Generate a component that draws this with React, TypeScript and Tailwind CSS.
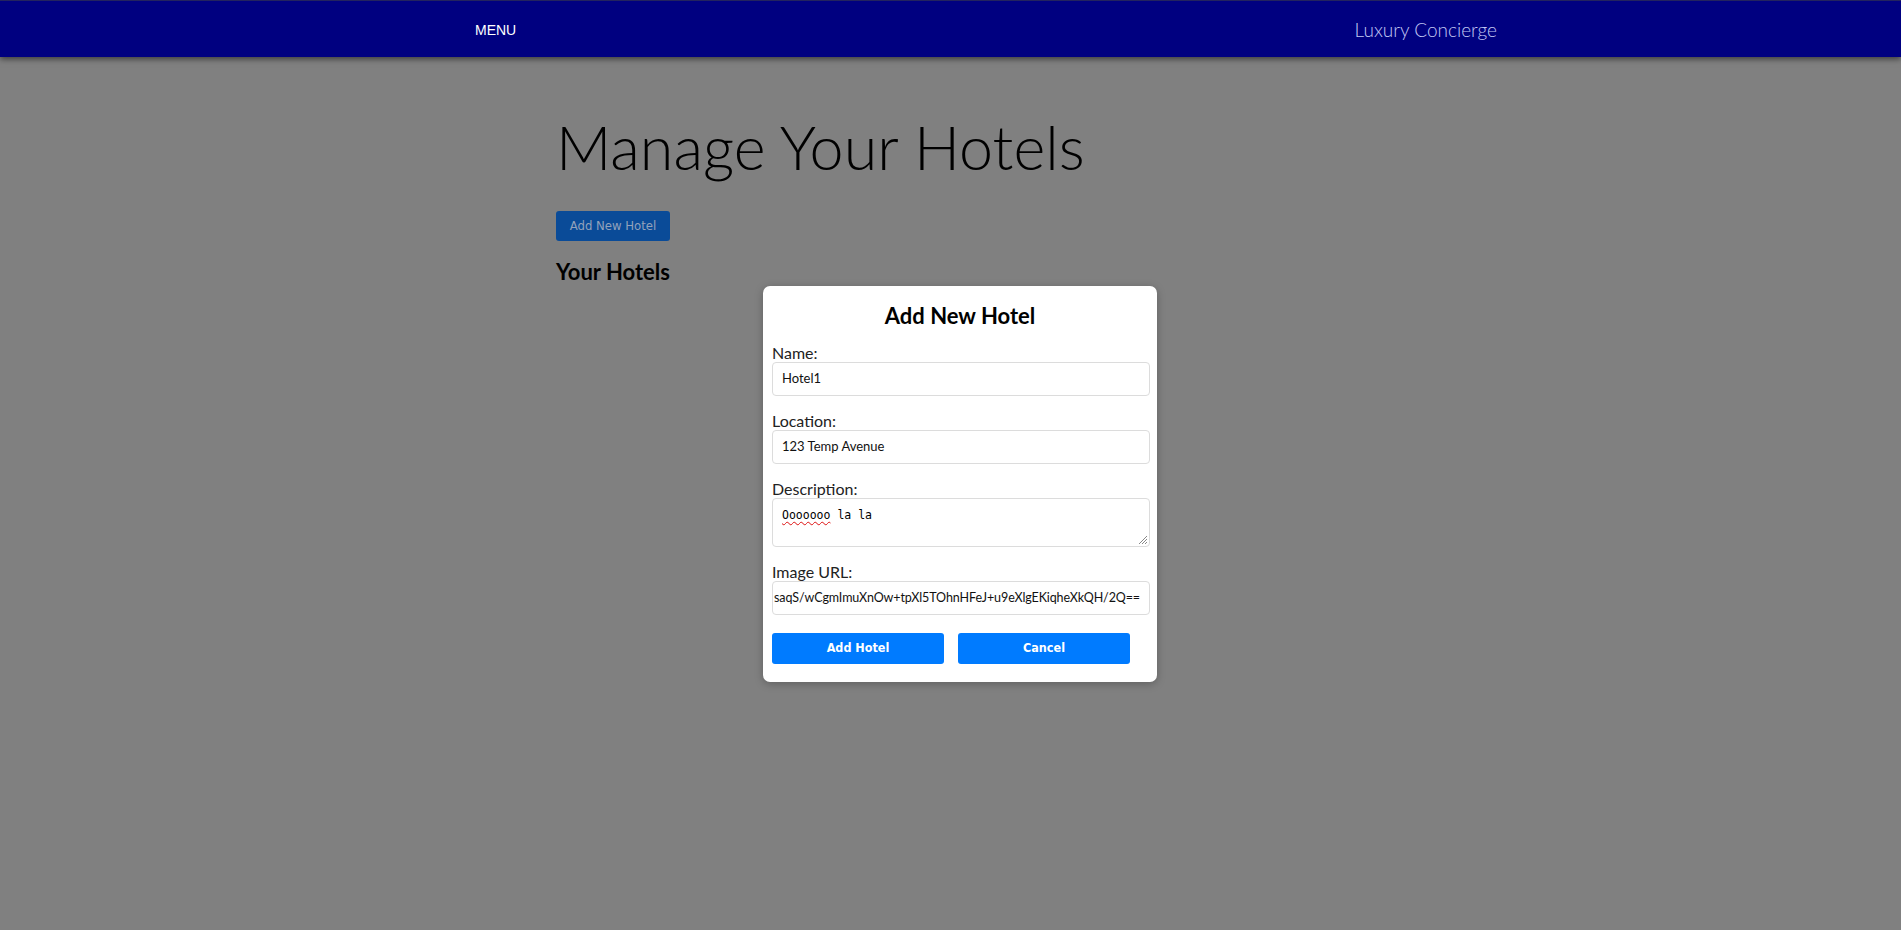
import React from "react";

const raleway = { fontFamily: "Lato, 'Noto Sans', sans-serif" };

function Field({ label, children }: { label: string; children: React.ReactNode }) {
  return (
    <div className="mt-[15px]">
      <div className="text-[16px] leading-[19px] text-[#222]">{label}</div>
      {children}
    </div>
  );
}

export default function App() {
  const url = "saqS/wCgmImuXnOw+tpXl5TOhnHFeJ+u9eXlgEKiqheXkQH/2Q==";
  return (
    <div className="relative min-h-[930px] w-full bg-[#808080]" style={raleway}>
      <header className="flex h-[57px] items-center border-t border-[#23235e] bg-[#000080] shadow-[0_2px_6px_rgba(0,0,0,0.55)]">
        <div className="flex-1">
          <span
            className="ml-[475px] text-[14px] text-white"
            style={{ fontFamily: "'Liberation Sans', Arial, sans-serif" }}
          >
            MENU
          </span>
        </div>
        <div className="flex flex-1 justify-center pt-[2px]">
          <span className="text-[19px] font-light text-[#c2c8f4]">Luxury Concierge</span>
        </div>
      </header>

      <main className="mx-auto w-[789px]">
        <h1 className="mt-[51px] text-[61px] font-light leading-[77px] text-black">
          Manage Your Hotels
        </h1>
        <button
          className="mt-[26px] flex h-[30px] w-[114px] items-center justify-center rounded-[3px] bg-[#0a4b98] text-[13px] text-[#93a2bb]"
          style={{ fontFamily: "'DejaVu Sans Condensed', 'Liberation Sans Narrow', sans-serif" }}
        >
          Add New Hotel
        </button>
        <h2 className="mt-[18px] text-[22px] font-bold leading-[26px] text-black">Your Hotels</h2>
      </main>

      <div className="absolute left-[763px] top-[286px] w-[394px] rounded-[7px] bg-white px-[9px] pb-[18px] pt-[17px] shadow-[0_2px_8px_rgba(0,0,0,0.25)]">
        <h3 className="text-center text-[22px] font-bold leading-[25px] text-black">Add New Hotel</h3>
        <div className="w-[378px]">
          <Field label="Name:">
            <div className="flex h-[34px] items-center rounded-[4px] border border-[#dcdcdc] px-[9px] text-[13px] text-[#111]">
              Hotel1
            </div>
          </Field>
          <Field label="Location:">
            <div className="flex h-[34px] items-center rounded-[4px] border border-[#dcdcdc] px-[9px] text-[13px] text-[#111]">
              123 Temp Avenue
            </div>
          </Field>
          <Field label="Description:">
            <div
              className="relative h-[49px] rounded-[4px] border border-[#dcdcdc] px-[9px] pt-[9px] text-[11.5px] leading-[14px] text-black"
              style={{ fontFamily: "'DejaVu Sans Mono', 'Liberation Mono', monospace" }}
            >
              <span className="underline decoration-[#d11] decoration-wavy decoration-1 underline-offset-2">
                Ooooooo
              </span>{" "}
              la la
              <svg
                className="absolute bottom-[1px] right-[1px]"
                width="12"
                height="12"
                viewBox="0 0 12 12"
              >
                <path d="M11 3 L3 11 M11 6 L6 11 M11 9 L9 11" stroke="#888" strokeWidth="1" />
              </svg>
            </div>
          </Field>
          <Field label="Image URL:">
            <div className="flex h-[34px] items-center justify-end overflow-hidden whitespace-nowrap rounded-[4px] border border-[#dcdcdc] px-[9px] text-[12.5px] tracking-[-0.1px] text-[#111]">
              <span>{url}</span>
            </div>
          </Field>
          <div
            className="mt-[18px] flex gap-[14px]"
            style={{ fontFamily: "'DejaVu Sans Condensed', 'Liberation Sans Narrow', sans-serif" }}
          >
            <button className="flex h-[31px] w-[172px] items-center justify-center rounded-[3px] bg-[#007bff] text-[12.5px] font-semibold text-white">
              Add Hotel
            </button>
            <button className="flex h-[31px] w-[172px] items-center justify-center rounded-[3px] bg-[#007bff] text-[12.5px] font-semibold text-white">
              Cancel
            </button>
          </div>
        </div>
      </div>
    </div>
  );
}
